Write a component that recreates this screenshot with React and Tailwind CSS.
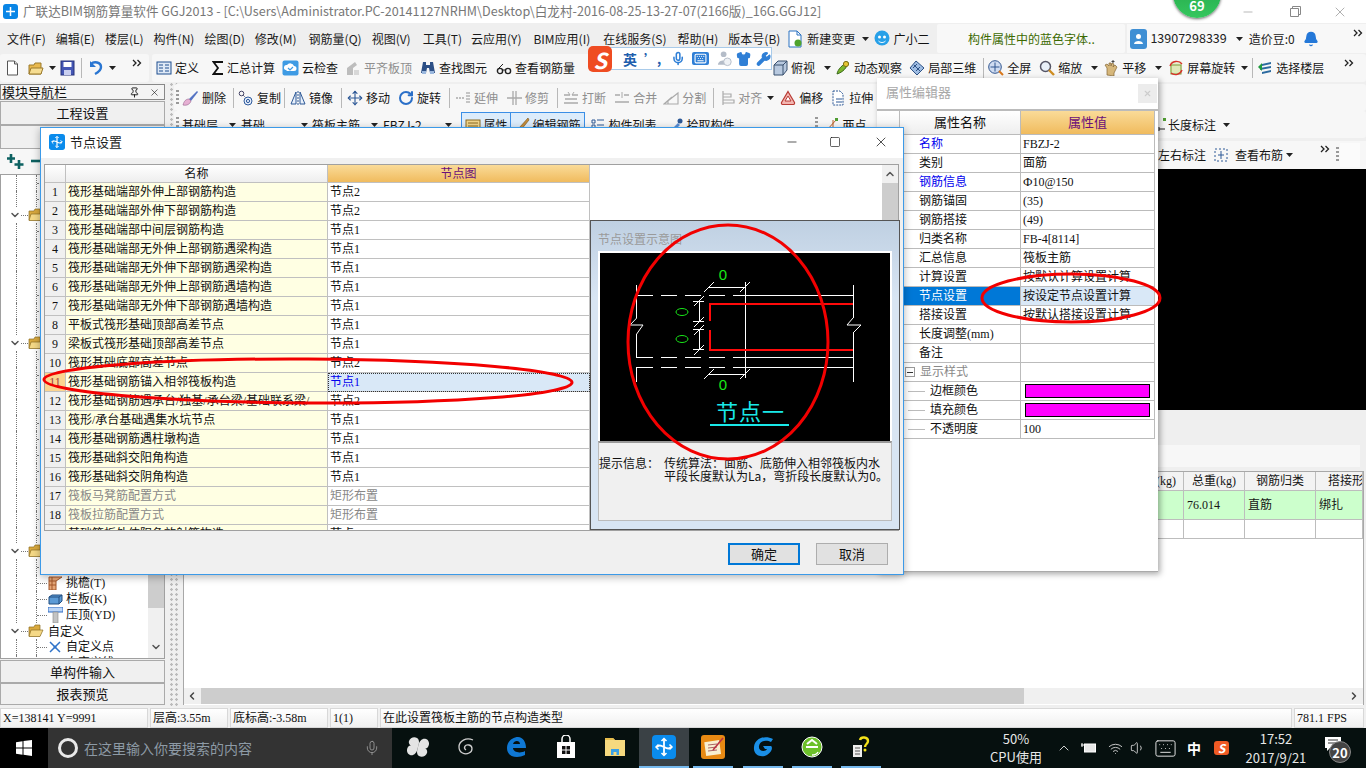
import React from 'react';
import { Bell, Wrench, Shirt, Mic, Keyboard, Wifi, Volume1, ChevronUp, ChevronDown, ChevronLeft, ChevronRight, X, Minus, Square, Pin, RotateCw, Move } from 'lucide-react';

const sim = "[font-family:'Liberation_Serif','Noto_Sans_CJK_SC',serif]";

const S = ({ children, w = 16, h = 16, className = '' }) => (
  <svg width={w} height={h} viewBox={`0 0 ${w} ${h}`} className={`shrink-0 ${className}`}>{children}</svg>
);
const Caret = ({ className = '' }) => (
  <svg width="7" height="4" viewBox="0 0 7 4" className={`shrink-0 ${className}`}><path d="M0 0h7L3.5 4z" fill="#222" /></svg>
);
const More = ({ className = '' }) => (
  <svg width="10" height="8" viewBox="0 0 10 8" className={`shrink-0 ${className}`}><path d="M1 1l3 3-3 3M5.5 1l3 3-3 3" fill="none" stroke="#222" strokeWidth="1.3" /></svg>
);
const Sep = ({ className = '' }) => <div className={`w-px h-[20px] bg-[#b8b8b8] shrink-0 ${className}`} />;
const Grip = ({ className = '' }) => <div className={`w-[3px] h-[16px] shrink-0 bg-[repeating-linear-gradient(#999_0_2px,transparent_2px_4px)] ${className}`} />;

const ic = {
  doc: <S w={13}><path d="M1.5 1h7l3 3v11h-10z" fill="#fff" stroke="#555" /><path d="M8.5 1v3h3" fill="#ddd" stroke="#555" /></S>,
  open: <S><path d="M1 5h5l1-2h6v11H1z" fill="#e9b94f" stroke="#9b7a2d" /><path d="M3 8h12l-2 6H1z" fill="#f6dd92" stroke="#9b7a2d" /></S>,
  save: <S w={15}><rect x="1" y="1" width="13" height="14" fill="#4557b5" stroke="#26337a" /><rect x="3.5" y="2" width="8" height="5" fill="#fff" /><rect x="4" y="10" width="7" height="5" fill="#c9cff0" /></S>,
  undo: <S w={14}><path d="M2 4c3-3 10-2 10 3 0 4-4 6-6 7" fill="none" stroke="#2a76d2" strokeWidth="2.4" /><path d="M1 1v6h6z" fill="#2a76d2" /></S>,
  define: <S><rect x="1" y="2" width="14" height="12" fill="#dfe9f6" stroke="#1f4f8f" /><path d="M3 5h4M3 8h4M3 11h4M9 5h4M9 8h4M9 11h4" stroke="#1f4f8f" /></S>,
  sigma: <S w={12}><path d="M11 2H1.5L6 8l-4.500 6H11" fill="none" stroke="#111" strokeWidth="1.8" /></S>,
  cloud: <S w={17}><rect x=".5" y=".5" width="16" height="15" rx="2" fill="#3e9be4" /><path d="M4 10a2.500 2.500 0 0 1 1-5 4 4 0 0 1 7 1 2.500 2.500 0 0 1 0 5H5z" fill="#fff" /><path d="M6 8l2 2 3-3" fill="none" stroke="#3e9be4" strokeWidth="1.2" /></S>,
  flush: <S><path d="M2 15V8l8-6 2 3-4 3v7z" fill="#bdbdbd" /><path d="M9 15v-5h5v5z" fill="#d8d8d8" /></S>,
  binoc: <S><path d="M3 2h3v3h4V2h3l2 11h-5l-1-5H7L6 13H1z" fill="#2c4f86" /><rect x="2" y="11" width="4" height="3" fill="#9bb8de" /><rect x="10" y="11" width="4" height="3" fill="#9bb8de" /></S>,
  glasses: <S><circle cx="4" cy="11" r="2.600" fill="none" stroke="#222" strokeWidth="1.4" /><circle cx="12" cy="11" r="2.600" fill="none" stroke="#222" strokeWidth="1.4" /><path d="M6.500 10h3M2 9l5-5" stroke="#222" /></S>,
  cube: <S><path d="M2 5l4-4h9v9l-4 5H2z" fill="#b8c9df" stroke="#39506f" /><path d="M2 5h9v10M11 5l4-4" fill="none" stroke="#39506f" /></S>,
  orbit: <S><path d="M2 14c1-5 5-9 11-12-1 6-5 10-11 12z" fill="#7db62f" stroke="#38691a" /><circle cx="11" cy="4" r="2.600" fill="#e7c635" stroke="#7d6e14" /></S>,
  local3d: <S><path d="M1 8l6-7 8 7-7 7z" fill="#9fbde3" stroke="#2e5285" /><path d="M4 8l4-4M7 11l4-4M5 5l6 6" stroke="#2e5285" /></S>,
  full: <S><circle cx="7" cy="7" r="6.300" fill="#cfdcf1" stroke="#2f548f" /><path d="M7 2.500v9M2.500 7h9" stroke="#2f548f" /><path d="M11 11l4 4" stroke="#d9771a" strokeWidth="2" /></S>,
  zoom: <S><circle cx="6.500" cy="6.500" r="5" fill="#e9f0f9" stroke="#556" strokeWidth="1.5" /><path d="M10 10l5 5" stroke="#cf8e22" strokeWidth="2.400" /></S>,
  pan: <S><path d="M4 15V8l-2-3 2-1 2 2V3h2v3l1-3 2 1-1 3 2-2 2 2-3 6v3z" fill="#d6b77b" stroke="#846533" strokeWidth=".7" /><path d="M10 3V0M8.500 1.500h3" stroke="#444" /></S>,
  rot: <S><path d="M2 12V3a2 2 0 0 1 2-2h8a2 2 0 0 1 2 2v9" fill="#e6efcf" /><rect x="3" y="5" width="10" height="9" fill="#dfe9b8" stroke="#7c9a33" /><path d="M2 6a7 7 0 0 1 12-2" fill="none" stroke="#d8312b" strokeWidth="1.400" /><path d="M14 10a7 7 0 0 1-11 3" fill="none" stroke="#d8312b" strokeWidth="1.400" /></S>,
  floors: <S><path d="M5 4l9-2v2l-9 2zM3 8l11-2v2L3 10zM5 12l9-2v2l-9 2z" fill="#2b6a9f" /><path d="M1 7l4-4v8z" fill="#1f9a3c" /></S>,
  del: <S w={17}><path d="M15 1L7 9l2 2 7-9z" fill="#5574c4" /><path d="M1 15c1-4 3-6 6-6l2 2c-1 3-4 5-8 4z" fill="#e6b0d3" stroke="#96608b" strokeWidth=".6" /></S>,
  copy: <S><circle cx="3.500" cy="3.500" r="2.300" fill="none" stroke="#446" /><circle cx="10" cy="11" r="4" fill="#e6eefb" stroke="#2e5a9c" /><circle cx="10" cy="11" r="1.600" fill="none" stroke="#2e5a9c" /><path d="M5 5l2 2" stroke="#446" strokeDasharray="1 1" /></S>,
  mirror: <S><path d="M6 2v12H1zM10 2v12h5z" fill="#e8f0fb" stroke="#2d5896" /><path d="M8 1v14" stroke="#2d5896" strokeDasharray="2 1" /></S>,
  move: <Move size={16} color="#2d5896" strokeWidth={1.700} className="shrink-0" />,
  rotate: <RotateCw size={16} color="#2a6fc8" strokeWidth={3} className="shrink-0" />,
  extend: <S><path d="M1 8h8M12 2v12M14 2v12" stroke="#aaa" strokeWidth="1.300" strokeDasharray="2 1" /></S>,
  trim: <S><path d="M7 1v14M10 1v14M1 8h15" stroke="#aaa" strokeWidth="1.300" /></S>,
  breakL: <S><path d="M1 5h6M9 5h6M1 13h14M2 9h12" stroke="#aaa" strokeWidth="1.400" /><path d="M5 2l2 3M11 2l-2 3" stroke="#aaa" /></S>,
  merge: <S><path d="M1 5h5M10 5h5M1 12h14" stroke="#aaa" strokeWidth="1.400" /><path d="M8 2v6" stroke="#aaa" /></S>,
  split: <S><path d="M1 14h14V3zM1 14L9 7M5 14V10" fill="none" stroke="#aaa" strokeWidth="1.100" /></S>,
  align: <S w={14}><path d="M2 1v14M2 4h8v3H2zM2 10h11v3H2z" fill="none" stroke="#aaa" strokeWidth="1.200" /></S>,
  offset: <S><path d="M8 1.500l6.500 11a1.500 1.500 0 0 1-1 2h-11a1.500 1.500 0 0 1-1-2z" fill="#f3b5b0" stroke="#b83b35" strokeWidth="1.200" /><path d="M8 6l3 5H5z" fill="#fff" stroke="#b83b35" /></S>,
  stretch: <S><path d="M3 1h7l3 3v11H3z" fill="#fff" stroke="#2d5896" strokeDasharray="2 1" /><path d="M6 9h6M6 12h6" stroke="#2d5896" /></S>,
  prop: <S><rect x="1" y="3" width="14" height="11" fill="#f1d58b" stroke="#8a6a22" /><path d="M3 6h10M3 9h10" stroke="#8a6a22" /></S>,
  edit: <S><path d="M14 1L5 11l2 2 8-10z" fill="#c48d3b" stroke="#765018" strokeWidth=".6" /><path d="M1 15h14" stroke="#111" strokeWidth="1.400" /></S>,
  list: <S><path d="M2 3h3v3H2zM7 3h7M2 8h3v3H2zM7 8h7M7 12h7" fill="none" stroke="#2d5896" /></S>,
  pick: <S><path d="M2 14L10 6l2 2-8 8z" fill="#5a8dd3" /><circle cx="12" cy="4" r="2.500" fill="#2d5896" /></S>,
  two: <S><path d="M2 14L13 2M9 14V3" stroke="#b75b22" /><rect x="1" y="12" width="3" height="3" fill="#4f9c32" /><rect x="11" y="1" width="3" height="3" fill="#4f9c32" /></S>,
};

function Tool({ m = '', icon, label, dim, arrow, caretM = 'ml-[6px]' }) {
  return (
    <div className={`flex items-center gap-[3px] shrink-0 ${m} ${dim ? 'text-[#8e8e8e]' : ''}`}>
      {icon}
      <span className="whitespace-nowrap">{label}</span>
      {arrow && <Caret className={caretM} />}
    </div>
  );
}

const menus = [
  ['文件(F)', ''], ['编辑(E)', 'ml-[10px]'], ['楼层(L)', 'ml-[10px]'], ['构件(N)', 'ml-[10px]'], ['绘图(D)', 'ml-[10px]'], ['修改(M)', 'ml-[10px]'],
  ['钢筋量(Q)', 'ml-[12px]'], ['视图(V)', 'ml-[10px]'], ['工具(T)', 'ml-[12px]'], ['云应用(Y)', 'ml-[9px]'], ['BIM应用(I)', 'ml-[12px]'], ['在线服务(S)', 'ml-[13px]'], ['帮助(H)', 'ml-[11px]'], ['版本号(B)', 'ml-[10px]'],
];

function TitleBar() {
  return (
    <div className="h-[23px] bg-white flex items-center shrink-0 relative">
      <div className="ml-[3px] w-[15px] h-[15px] rounded-[3px] bg-[#0a86e6] flex items-center justify-center">
        <svg width="11" height="11" viewBox="0 0 11 11"><path d="M5.500 1v9M1 5.500h9" stroke="#fff" strokeWidth="1.500" /></svg>
      </div>
      <span className="ml-[5px] text-[12.600px] text-[#777] whitespace-nowrap">广联达BIM钢筋算量软件 GGJ2013 - [C:\Users\Administrator.PC-20141127NRHM\Desktop\白龙村-2016-08-25-13-27-07(2166版)_16G.GGJ12]</span>
      <div className="ml-auto flex items-center text-[#888]">
        <Minus size={14} strokeWidth={1} className="mr-[35px]" />
        <svg width="11" height="11" viewBox="0 0 11 11" className="mr-[31px]"><path d="M.5 2.500h8v8h-8zM2.500 2.500v-2h8v8h-2" fill="none" stroke="#888" /></svg>
        <X size={16} strokeWidth={1} className="mr-[18px]" />
      </div>
    </div>
  );
}

function MenuBar() {
  return (
    <div className="h-[31px] bg-[#efefef] flex items-center shrink-0 text-[12px] text-[#1a1a1a] pl-[7px]">
      {menus.map(([t, m]) => <span key={t} className={`whitespace-nowrap ${m}`}>{t}</span>)}
      <svg width="16" height="18" viewBox="0 0 16 18" className="ml-[7px] shrink-0"><path d="M2 1h8l4 4v12H2z" fill="#fff" stroke="#2a72c2" /><path d="M10 1v4h4" fill="none" stroke="#2a72c2" /><circle cx="11" cy="13" r="3.500" fill="#4fa32c" /></svg>
      <span className="ml-[4px] whitespace-nowrap">新建变更</span>
      <Caret className="ml-[7px]" />
      <svg width="16" height="18" viewBox="0 0 16 18" className="ml-[5px] shrink-0"><ellipse cx="8" cy="8" rx="7.500" ry="7.500" fill="#27a0e8" /><circle cx="5.500" cy="7" r="1.500" fill="#fff" /><circle cx="10.500" cy="7" r="1.500" fill="#fff" /><path d="M4.500 11c2 2 5 2 7 0" stroke="#fff" fill="none" /></svg>
      <span className="ml-[3px] whitespace-nowrap text-[#111]">广小二</span>
      <div className="ml-[8px] w-[188px] h-[29px] bg-[#f8f8f8] rounded-[2px] flex items-center justify-center text-[#3c6a00] whitespace-nowrap shrink-0">构件属性中的蓝色字体..</div>
      <div className="ml-[2px] flex-1 h-[29px] bg-[#f8f8f8] flex items-center">
        <div className="ml-[3px] w-[17px] h-[20px] rounded-[3px] bg-[#3f8fd4] flex items-center justify-center">
          <svg width="11" height="12" viewBox="0 0 11 12"><circle cx="5.500" cy="3.500" r="2.500" fill="#fff" /><path d="M1 11c0-4 9-4 9 0z" fill="#fff" /></svg>
        </div>
        <span className="ml-[3px] text-[12.500px] text-[#222]">13907298339</span>
        <Caret className="ml-[9px]" />
        <span className="ml-[6px] whitespace-nowrap">造价豆:0</span>
        <Bell size={16} fill="#2478d8" color="#2478d8" className="ml-[8px] shrink-0" />
        <More className="ml-[34px] -mt-[12px]" />
      </div>
    </div>
  );
}

function Toolbar1() {
  return (
    <div className="h-[28px] flex shrink-0 text-[12px] text-[#151515] bg-[#efefef]">
      <div className="w-[149px] bg-[#f7f7f7] rounded-[3px] flex items-center pl-[6px]">
        {ic.doc}
        <div className="ml-[9px]">{ic.open}</div>
        <Caret className="ml-[5px]" />
        <div className="ml-[4px]">{ic.save}</div>
        <Sep className="ml-[6px]" />
        <div className="ml-[7px]">{ic.undo}</div>
        <Caret className="ml-[6px]" />
        <More className="ml-[16px] -mt-[10px]" />
      </div>
      <div className="flex-1 ml-[3px] bg-[#f7f7f7] rounded-[3px] flex items-center">
        <Tool m="ml-[4px]" icon={ic.define} label="定义" />
        <Tool m="ml-[13px]" icon={ic.sigma} label="汇总计算" />
        <Tool m="ml-[7px]" icon={ic.cloud} label="云检查" />
        <Tool m="ml-[7px]" icon={ic.flush} label="平齐板顶" dim />
        <Tool m="ml-[8px]" icon={ic.binoc} label="查找图元" />
        <Tool m="ml-[9px]" icon={ic.glasses} label="查看钢筋量" />
        <Tool m="ml-[197px]" icon={ic.cube} label="俯视" arrow />
        <Tool m="ml-[4px]" icon={ic.orbit} label="动态观察" />
        <Tool m="ml-[7px]" icon={ic.local3d} label="局部三维" />
        <Sep className="ml-[7px]" />
        <Tool m="ml-[4px]" icon={ic.full} label="全屏" />
        <Tool m="ml-[8px]" icon={ic.zoom} label="缩放" arrow />
        <Tool m="ml-[5px]" icon={ic.pan} label="平移" arrow />
        <Tool m="ml-[6px]" icon={ic.rot} label="屏幕旋转" arrow caretM="ml-[3px]" />
        <Sep className="ml-[4px]" />
        <Tool m="ml-[4px]" icon={ic.floors} label="选择楼层" />
        <More className="ml-[20px] -mt-[10px]" />
      </div>
    </div>
  );
}

const TreeKid = ({ icon, label }) => (
  <div className="h-4 ml-[15px] border-l border-dotted border-[#777]">
    <div className="h-4 ml-[19px] border-l border-dotted border-[#777] flex items-center">
      <div className="w-[10px] border-t border-dotted border-[#777] shrink-0" />
      <div className="w-[16px] flex justify-center shrink-0">{icon}</div>
      {label && <span className={`ml-[3px] whitespace-nowrap ${sim} text-[#111]`}>{label}</span>}
    </div>
  </div>
);
const TreeGroup = ({ label }) => (
  <div className="h-4 flex items-center">
    <ChevronDown size={12} strokeWidth={3} color="#555" className="ml-[8px] shrink-0" />
    <div className="w-[7px] border-t border-dotted border-[#777] shrink-0" />
    <svg width="16" height="14" viewBox="0 0 16 14" className="shrink-0"><path d="M1 3h5l1-2h5v11H1z" fill="#d9a93e" stroke="#8c6f24" strokeWidth=".7" /><path d="M3 6h12l-3 6.500H1z" fill="#f5d987" stroke="#8c6f24" strokeWidth=".7" /></svg>
    {label && <span className="ml-[4px] whitespace-nowrap text-[#111]">{label}</span>}
  </div>
);
const kidIc = {
  t: <svg width="15" height="14" viewBox="0 0 15 14"><path d="M1 1h13L8 5v9H1z" fill="#e6a778" stroke="#a3562b" /><path d="M1 5h7M1 9h7M4 1v13" stroke="#a3562b" /></svg>,
  k: <svg width="15" height="12" viewBox="0 0 15 12"><path d="M1 4l3-2h10v6l-3 3H1z" fill="#5c9bd6" stroke="#234f80" /><path d="M1 4h10v7M11 4l3-2" fill="none" stroke="#234f80" /></svg>,
  y: <svg width="15" height="16" viewBox="0 0 15 16"><rect x="0" y="0" width="15" height="5" fill="#bcd6f7" stroke="#2f6bc2" /><rect x="5" y="5" width="5" height="11" fill="#c4c4c4" stroke="#888" strokeWidth=".6" /></svg>,
  p: <svg width="14" height="14" viewBox="0 0 14 14"><path d="M2 2l10 10M12 2L2 12" stroke="#2f73c9" strokeWidth="1.500" /><circle cx="7" cy="7" r="1.500" fill="#2f73c9" /></svg>,
  l: <svg width="15" height="8" viewBox="0 0 15 8"><path d="M1 4h13" stroke="#2f6bc2" /><rect x="0" y="2" width="3" height="4" fill="#2f6bc2" /><rect x="12" y="2" width="3" height="4" fill="#2f6bc2" /></svg>,
};

function LeftPanel() {
  const blank = (n, p) => Array.from({ length: n }, (_, i) => <TreeKid key={p + i} />);
  return (
    <div className="w-[165px] shrink-0 flex flex-col text-[12px] text-[#111] bg-[#f0f0f0]">
      <div className="h-[16px] mt-[2px] flex items-center border border-[#888] px-[1px] text-[13px] text-[#111] bg-[#f4f4f4]">
        <span className="whitespace-nowrap">模块导航栏</span>
        <Pin size={11} color="#111" className="ml-auto mr-[9px]" />
        <X size={11} strokeWidth={1.300} color="#111" className="mr-[3px]" />
      </div>
      <div className="h-[24px] mt-px flex items-center justify-center border border-[#aaa] bg-[#f0f0f0] text-[13px]">工程设置</div>
      <div className="h-[24px] border border-[#aaa] bg-[#f0f0f0]" />
      <div className="h-[25px] flex items-center pl-[6px] bg-[#f7f7f7]">
        <svg width="40" height="20" viewBox="0 0 40 20"><path d="M5 2v9M1 6.500h8M13 8v9M8.500 12.500h9" stroke="#0d6262" strokeWidth="2.600" /><path d="M25 9h11" stroke="#0d6262" strokeWidth="2.600" /></svg>
      </div>
      <div className="flex-1 min-h-0 flex border border-[#a0a0a0] bg-white overflow-hidden">
        <div className="flex-1 min-w-0 overflow-hidden">
          {blank(2, 'a')}
          <TreeGroup />
          {blank(7, 'b')}
          <TreeGroup />
          {blank(12, 'c')}
          <TreeGroup />
          <TreeKid />
          <TreeKid icon={kidIc.t} label="挑檐(T)" />
          <TreeKid icon={kidIc.k} label="栏板(K)" />
          <TreeKid icon={kidIc.y} label="压顶(YD)" />
          <TreeGroup label="自定义" />
          <TreeKid icon={kidIc.p} label="自定义点" />
          <TreeKid icon={kidIc.l} label="自定义线(X)" />
        </div>
        <div className="w-[16px] shrink-0 flex flex-col bg-[#f0f0f0]">
          <div className="h-[433px] bg-[#cdcdcd] shrink-0" />
          <div className="mt-auto h-[16px] flex items-center justify-center mb-[3px]"><ChevronDown size={12} strokeWidth={3} color="#555" /></div>
        </div>
      </div>
      <div className="h-[23px] mt-px flex items-center justify-center border border-[#aaa] text-[13px]">单构件输入</div>
      <div className="h-[22px] mb-[2px] flex items-center justify-center border border-[#aaa] text-[13px]">报表预览</div>
    </div>
  );
}

function RightArea() {
  return (
    <div className="flex-1 min-w-0 flex flex-col text-[12px] text-[#151515] bg-[#efefef]">
      <div className="h-[27px] mt-[2px] shrink-0 bg-[#f7f7f7] rounded-[3px] flex items-center ml-[-9px] relative">
        <Grip className="ml-[2px]" />
        <Tool m="ml-[3px]" icon={ic.del} label="删除" />
        <Sep className="ml-[7px]" />
        <Tool m="ml-[4px]" icon={ic.copy} label="复制" />
        <Sep className="ml-[3px]" />
        <Tool m="ml-[5px]" icon={ic.mirror} label="镜像" />
        <Sep className="ml-[8px]" />
        <Tool m="ml-[5px]" icon={ic.move} label="移动" />
        <Tool m="ml-[8px]" icon={ic.rotate} label="旋转" />
        <Sep className="ml-[8px]" />
        <Tool m="ml-[5px]" icon={ic.extend} label="延伸" dim />
        <Tool m="ml-[8px]" icon={ic.trim} label="修剪" dim />
        <Sep className="ml-[8px]" />
        <Tool m="ml-[5px]" icon={ic.breakL} label="打断" dim />
        <Tool m="ml-[8px]" icon={ic.merge} label="合并" dim />
        <Tool m="ml-[6px]" icon={ic.split} label="分割" dim />
        <Sep className="ml-[7px]" />
        <Tool m="ml-[7px]" icon={ic.align} label="对齐" dim arrow caretM="ml-[2px]" />
        <Tool m="ml-[6px]" icon={ic.offset} label="偏移" />
        <Tool m="ml-[7px]" icon={ic.stretch} label="拉伸" />
      </div>
      <div className="h-[27px] shrink-0 flex items-center ml-[-9px]">
        <div className="h-full flex-1 bg-[#f7f7f7] rounded-[3px] flex items-center relative">
          <Grip className="ml-[2px]" />
          <span className="ml-[3px]">基础层</span><Caret className="ml-[11px]" />
          <span className="ml-[5px]">基础</span><Caret className="ml-[36px]" />
          <span className="ml-[4px]">筏板主筋</span><Caret className="ml-[11px]" />
          <span className="ml-[5px]">FBZJ-2</span><Caret className="ml-[23px]" />
          <div className="ml-[9px] h-[25px] w-[50px] border border-[#3a8ee6] bg-[#dcecfb] flex items-center pl-[3px] gap-[3px]">{ic.prop}<span>属性</span></div>
          <div className="h-[25px] w-[74px] border border-[#3a8ee6] border-l-0 bg-[#dcecfb] flex items-center pl-[3px] gap-[3px]">{ic.edit}<span className="whitespace-nowrap">编辑钢筋</span></div>
          <Tool m="ml-[5px]" icon={ic.list} label="构件列表" />
          <Tool m="ml-[11px]" icon={ic.pick} label="拾取构件" />
          <Grip className="ml-[80px]" />
          <Tool m="ml-[6px]" icon={ic.two} label="两点" />
          <div className="ml-auto mr-[136px] flex items-center gap-[1px] shrink-0">
            <svg width="9" height="14" viewBox="0 0 9 14"><rect x="5" y="0" width="3" height="3" fill="#4f9c32" /><path d="M1 11h6M1 9v4" stroke="#222" /></svg>
            <span className="whitespace-nowrap">长度标注</span>
            <Caret className="ml-[6px]" />
          </div>
        </div>
      </div>
      <div className="h-[28px] shrink-0 flex items-center bg-[#f7f7f7] mt-[3px] justify-end text-[#151515]">
        <span className="whitespace-nowrap">左右标注</span>
        <svg width="14" height="14" viewBox="0 0 14 14" className="ml-[8px] shrink-0"><path d="M1 1h12v12H1z" fill="none" stroke="#2d5896" strokeDasharray="2 2" /><path d="M7 3v8M4 7h6" stroke="#2d5896" /></svg>
        <span className="ml-[7px] whitespace-nowrap">查看布筋</span>
        <Caret className="ml-[3px]" />
        <More className="ml-[27px] -mt-[12px]" />
        <Grip className="ml-[6px]" />
        <div className="w-[20px] h-[24px] ml-[1px] bg-[#fbfbfb]" />
        <div className="w-[6px]" />
      </div>
      <div className="h-[241px] shrink-0 bg-black" />
      <div className="h-[35px] shrink-0" />
      <div className="h-[22px] shrink-0 bg-[#f7f7f7] mr-[6px]" />
      <div className="h-[4px] shrink-0" />
      <div className="flex-1 min-h-0 bg-white border border-[#a8a8a8] border-b-0 mr-[2px] flex flex-col">
        <div className={`grid grid-cols-[1fr_61px_71px_47px] ${sim}`}>
          {[['(kg)', 'justify-end pr-[7px]'], ['总重(kg)', 'justify-center'], ['钢筋归类', 'justify-center'], ['搭接形式', 'pl-[12px]']].map(([t, c]) => (
            <div key={t} className={`h-[19px] flex items-center overflow-hidden whitespace-nowrap bg-[#f3f3f3] border-b border-r border-[#bdbdbd] ${c}`}>{t}</div>
          ))}
          {['', '76.014', '直筋', '绑扎'].map((t, i) => (
            <div key={i} className="h-[29px] flex items-center pl-[3px] bg-[#ccffcc] border-b border-r border-[#bdbdbd]">{t}</div>
          ))}
          {[0, 1, 2, 3].map(i => <div key={i} className="h-[19px] border-b border-r border-[#bdbdbd]" />)}
        </div>
        <div className="flex-1" />
        <div className="h-[16px] shrink-0 bg-[#f0f0f0] flex items-center mb-[1px]">
          <ChevronLeft size={12} strokeWidth={3} color="#444" className="ml-[2px] shrink-0" />
          <div className="ml-[3px] w-[823px] h-full bg-[#cdcdcd] shrink-0" />
          <ChevronRight size={12} strokeWidth={3} color="#444" className="ml-auto mr-[3px] shrink-0" />
        </div>
      </div>
      <div className="h-[2px] shrink-0" />
    </div>
  );
}

function StatusBar() {
  const c = `h-[20px] flex items-center pl-[2px] bg-[linear-gradient(#fff,#f0f0f0)] border border-[#d8d8d8] whitespace-nowrap shrink-0 ${sim}`;
  return (
    <div className="h-[21px] flex gap-[2px] text-[12px] text-[#111] shrink-0 bg-[#f0f0f0] pt-px">
      <div className={`${c} w-[148px]`}>X=138141 Y=9991</div>
      <div className={`${c} w-[78px]`}>层高:3.55m</div>
      <div className={`${c} w-[98px]`}>底标高:-3.58m</div>
      <div className={`${c} w-[48px]`}>1(1)</div>
      <div className={`${c} w-[912px]`}>在此设置筏板主筋的节点构造类型</div>
      <div className={`${c} w-[70px]`}>781.1 FPS</div>
    </div>
  );
}

const Tb = ({ children, active, line = true }) => (
  <div className={`w-[49.300px] h-full flex flex-col items-center shrink-0 ${active ? 'bg-[#3a4145]' : ''}`}>
    <div className="flex-1 flex items-center justify-center">{children}</div>
    <div className={`h-[2px] ${active ? 'w-full' : 'w-[40px]'} ${line ? 'bg-[#76b9ed]' : ''}`} />
  </div>
);
const AppIcon = ({ size = 24 }) => (
  <svg width={size} height={size} viewBox="0 0 24 24"><rect width="24" height="24" rx="4" fill="#0a8bec" /><path d="M12 4v16M5 12c2-2 3-2 7 0s5 2 7 0" fill="none" stroke="#fff" strokeWidth="1.800" /><path d="M9.500 6L12 3.500 14.500 6M9.500 18l2.500 2.500 2.500-2.500M6.500 9.500L4 12l2.500 2.500M17.500 9.500L20 12l-2.500 2.500" fill="none" stroke="#fff" strokeWidth="1.500" /></svg>
);

function Taskbar() {
  return (
    <div className="h-[40px] flex shrink-0 bg-[#06100f] text-white">
      <div className="w-[48px] bg-black flex items-center justify-center">
        <svg width="16" height="16" viewBox="0 0 16 16"><path d="M0 2.300l6.500-1v6.300H0zM7.500 1.100L16 0v7.600H7.500zM0 8.500h6.500v6.300L0 13.800zM7.500 8.500H16V16l-8.500-1.200z" fill="#fff" /></svg>
      </div>
      <div className="w-[344px] bg-[#333] flex items-center">
        <div className="ml-[10px] w-[20px] h-[20px] rounded-full border-[3px] border-[#e8e8e8]" />
        <span className="ml-[6px] text-[14px] text-[#8d9aa5] whitespace-nowrap">在这里输入你要搜索的内容</span>
        <Mic size={16} strokeWidth={1.300} color="#9a9a9a" className="ml-auto mr-[12px]" />
      </div>
      <div className="w-px" />
      <Tb line={false}><svg width="22" height="22" viewBox="0 0 22 22"><g fill="#e4e4e4"><path d="M11 11C4 12 1 8 2 5s5-5 8-3 2 6 1 9z" /><path d="M11 11c1-7 5-9 8-8s4 5 2 8-6 1-10 0z" /><path d="M11 11c7-1 10 3 9 6s-5 5-8 3-2-6-1-9z" /><path d="M11 11c-1 7-5 9-8 8s-4-5-2-8 6-1 10 0z" /></g></svg></Tb>
      <Tb line={false}><svg width="20" height="20" viewBox="0 0 20 20"><path d="M16 3C9 0 2 4 2 10s6 8 10 6 4-7 0-8-6 3-3 5" fill="none" stroke="#cfcfcf" strokeWidth="1.300" /></svg></Tb>
      <Tb line={false}><svg width="22" height="22" viewBox="0 0 22 22"><path d="M2 12C2 5 8 1 13 1c5 0 8 5 8 11H8c0 4 7 6 12 3v4c-8 4-18 2-18-7zM8 8h7c0-4-6-4-7 0z" fill="#0f78d4" /></svg></Tb>
      <Tb line={false}><svg width="20" height="24" viewBox="0 0 20 24"><path d="M1 7h18v16H1z" fill="#fff" /><path d="M6 7V4a4 4 0 0 1 8 0v3" fill="none" stroke="#fff" strokeWidth="1.500" /><path d="M6 11h3.500v3.500H6zM10.500 11H14v3.500h-3.500zM6 15.500h3.500V19H6zM10.500 15.500H14V19h-3.500z" fill="#111" /></svg></Tb>
      <Tb line={false}><svg width="22" height="20" viewBox="0 0 22 20"><path d="M1 1h8l2 2h10v16H1z" fill="#f6d97f" /><path d="M1 1h8l2 2H1z" fill="#e7bd4d" /><path d="M7 18v-6h8v6h-2.500v-3h-3v3z" fill="#3aa0e6" /></svg></Tb>
      <Tb active><AppIcon /></Tb>
      <Tb><svg width="24" height="24" viewBox="0 0 24 24"><rect width="24" height="24" rx="3" fill="#e88a13" /><rect x="4" y="6" width="15" height="14" fill="#f8efd0" transform="rotate(-8 12 12)" /><path d="M7 10l9-1M7 13l9-1M7 16l9-1" stroke="#a66" /><path d="M22 3L12 15" stroke="#b34" strokeWidth="1.600" /></svg></Tb>
      <Tb><svg width="24" height="24" viewBox="0 0 24 24"><path d="M22 4C14 0 4 3 3 12s8 11 13 8 6-8 4-9l-8 0 2 3h2c-1 3-9 3-8-3s8-6 12-4z" fill="#1a8fe6" /></svg></Tb>
      <Tb><svg width="22" height="24" viewBox="0 0 22 24"><circle cx="11" cy="12" r="10" fill="#6cc02a" stroke="#fff" strokeWidth="1" /><path d="M5 12h12M6 9l5-4 5 4" fill="none" stroke="#fff" strokeWidth="2" /><path d="M11 20c3 0 5-1 6-3" stroke="#fff" fill="none" strokeWidth="1.500" /></svg></Tb>
      <Tb><svg width="18" height="22" viewBox="0 0 18 22"><rect x="1" y="9" width="9" height="12" fill="#eee" /><path d="M3 12h5M3 15h5M3 18h5" stroke="#555" /><path d="M8 4c1-4 8-3 8 1 0 3-3 3-3 6" fill="none" stroke="#f4e21a" strokeWidth="2.400" /><circle cx="13" cy="14" r="1.500" fill="#f4e21a" /></svg></Tb>

      <div className="ml-[100px] w-[60px] flex flex-col items-center justify-center text-[13px] leading-[18px] text-[#e8e8e8]">
        <span>50%</span><span className="whitespace-nowrap">CPU使用</span>
      </div>
      <ChevronUp size={16} strokeWidth={1.400} color="#ddd" className="ml-[10px] self-center shrink-0" />
      <svg width="16" height="12" viewBox="0 0 16 12" className="ml-[9px] self-center shrink-0"><rect x="3.500" y="2" width="11" height="8" fill="#e8e8e8" stroke="#fff" /><path d="M0 3h3M1 1v4" stroke="#fff" /></svg>
      <Wifi size={15} strokeWidth={1.500} color="#cfcfcf" className="ml-[11px] self-center shrink-0" />
      <Volume1 size={16} strokeWidth={1.300} color="#ddd" className="ml-[7px] self-center shrink-0" />
      <Keyboard size={23} strokeWidth={1} color="#e8e8e8" className="ml-[8px] self-center shrink-0" />
      <span className="ml-[10px] self-center text-[14px] font-bold">中</span>
      <div className="ml-[13px] self-center w-[15px] h-[14px] rounded-[3px] bg-[#ef5a24] flex items-center justify-center text-[12px] font-bold italic leading-none shrink-0">S</div>
      <div className="ml-[14px] w-[66px] flex flex-col items-center justify-center text-[13px] leading-[19px] text-[#e8e8e8]">
        <span>17:52</span><span>2017/9/21</span>
      </div>
      <div className="flex-1 flex items-center justify-center relative pr-[9px]">
        <svg width="16" height="14" viewBox="0 0 16 14" className="-mt-[8px]"><path d="M0 0h16v11H5l-3 3v-3H0z" fill="#fff" /><path d="M3 3h10M3 6h10" stroke="#333" /></svg>
        <div className="absolute left-[20px] top-[13px] w-[22px] h-[22px] rounded-full bg-[#444] border border-[#888] flex items-center justify-center text-[13px] font-bold leading-none">20</div>
      </div>
    </div>
  );
}

function Sogou() {
  return (
    <div className="absolute left-[588px] top-[45px] flex items-center h-[27px]">
      <div className="w-[24px] h-[26px] rounded-[5px] bg-[#ef4c22] flex items-center justify-center text-white text-[22px] font-bold italic leading-none z-10">S</div>
      <div className="-ml-[4px] h-[23px] w-[164px] bg-white border border-[#a9cbea] flex items-center pl-[14px] text-[#1f5fae]">
        <span className="text-[14px] font-bold leading-none">英</span>
        <span className="ml-[7px] text-[13px] font-bold leading-none">’,</span>
        <Mic size={15} color="#2f7fd6" strokeWidth={2.600} className="ml-[10px]" />
        <div className="ml-[7px] w-[17px] h-[13px] rounded-[2px] bg-[#2f7fd6] flex items-center justify-center">
          <Keyboard size={13} color="#fff" />
        </div>
        <svg width="16" height="17" viewBox="0 0 16 17" className="ml-[8px]"><circle cx="7" cy="4" r="3" fill="#b4bcc8" /><path d="M1 15c0-6 12-6 12 0z" fill="#b4bcc8" /><circle cx="11" cy="12" r="4" fill="#eef1f5" stroke="#b4bcc8" /></svg>
        <Shirt size={16} fill="#2f7fd6" color="#2f7fd6" className="ml-[4px]" />
        <Wrench size={16} fill="#2f7fd6" color="#2f7fd6" className="ml-[5px]" />
      </div>
    </div>
  );
}

const props = [
  ['名称', 'FBZJ-2', 'blue'], ['类别', '面筋'], ['钢筋信息', 'Ф10@150', 'blue'], ['钢筋锚固', '(35)'], ['钢筋搭接', '(49)'], ['归类名称', 'FB-4[8114]'],
  ['汇总信息', '筏板主筋'], ['计算设置', '按默认计算设置计算'], ['节点设置', '按设定节点设置计算', 'sel'], ['搭接设置', '按默认搭接设置计算'], ['长度调整(mm)', ''], ['备注', ''],
];

function PropEditor() {
  return (
    <div className="absolute left-[877px] top-[78px] w-[281px] h-[494px] bg-white shadow-[2px_2px_6px_rgba(0,0,0,0.35)] border-b border-[#aaa] text-[12px] text-[#111] flex flex-col">
      <div className="h-[31px] flex items-center shrink-0 pl-[9px]">
        <span className="text-[13px] text-[#a8a8a8] pb-[3px]">属性编辑器</span>
        <div className="ml-auto mr-px w-[19px] h-[19px] bg-[#ececec] flex items-center justify-center"><X size={9} color="#ccc" strokeWidth={3} /></div>
      </div>
      <div className={`grid grid-cols-[23px_121px_134px] border-t-2 border-[#bbb] ${sim}`}>
        <div className="h-[24px] border-b border-r border-[#bbb] bg-[linear-gradient(#fff,#eee)]" />
        <div className="h-[24px] border-b border-r border-[#bbb] bg-[linear-gradient(#fff,#eee)] flex items-center justify-center text-[13px]">属性名称</div>
        <div className="h-[24px] border-b border-r border-[#bbb] bg-[linear-gradient(#fadb98,#f0bb5e)] flex items-center justify-center text-[13px] text-[#6a0f7a]">属性值</div>
        {props.map(([n, v, k]) => (
          <React.Fragment key={n}>
            <div className="h-[19px] border-b border-[#bbb]" />
            <div className={`h-[19px] border-b border-r border-[#bbb] flex items-center -ml-[4px] pl-[23px] ${k === 'blue' ? 'text-[#0000ee]' : ''} ${k === 'sel' ? 'bg-[#0078d7] text-white' : ''}`}>{n}</div>
            <div className={`h-[19px] border-b border-r border-[#bbb] flex items-center pl-[2px] whitespace-nowrap ${k === 'sel' ? 'bg-[#d9e8f7]' : ''}`}>{v}</div>
          </React.Fragment>
        ))}
        <div className="h-[19px] border-b border-[#bbb]" />
        <div className="h-[19px] border-b border-r border-[#bbb] flex items-center -ml-[4px] pl-[9px] text-[#888]">
          <div className="w-[10px] h-[10px] border border-[#999] flex items-center justify-center mr-[5px]"><div className="w-[6px] h-px bg-[#333]" /></div>显示样式
        </div>
        <div className="h-[19px] border-b border-r border-[#bbb]" />
        {['边框颜色', '填充颜色', '不透明度'].map((n, i) => (
          <React.Fragment key={n}>
            <div className="h-[19px] border-b border-[#bbb]" />
            <div className="h-[19px] border-b border-r border-[#bbb] flex items-center -ml-[4px] pl-[12px]">
              <div className="w-[17px] border-t border-[#bbb] mr-[5px]" />{n}
            </div>
            <div className="h-[19px] border-b border-r border-[#bbb] flex items-center pl-[2px]">
              {i < 2 ? <div className="ml-[2px] w-[125px] h-[14px] bg-[#ff00ff] border border-black" /> : '100'}
            </div>
          </React.Fragment>
        ))}
      </div>
    </div>
  );
}

const rows = [
  ['筏形基础端部外伸上部钢筋构造', '节点2'], ['筏形基础端部外伸下部钢筋构造', '节点2'], ['筏形基础端部中间层钢筋构造', '节点1'],
  ['筏形基础端部无外伸上部钢筋遇梁构造', '节点1'], ['筏形基础端部无外伸下部钢筋遇梁构造', '节点1'], ['筏形基础端部无外伸上部钢筋遇墙构造', '节点1'],
  ['筏形基础端部无外伸下部钢筋遇墙构造', '节点1'], ['平板式筏形基础顶部高差节点', '节点1'], ['梁板式筏形基础顶部高差节点', '节点1'],
  ['筏形基础底部高差节点', '节点2'], ['筏形基础钢筋锚入相邻筏板构造', '节点1'], ['筏形基础钢筋遇承台/独基/承台梁/基础联系梁/', '节点2'],
  ['筏形/承台基础遇集水坑节点', '节点1'], ['筏形基础钢筋遇柱墩构造', '节点1'], ['筏形基础斜交阳角构造', '节点1'], ['筏形基础斜交阴角构造', '节点1'],
  ['筏板马凳筋配置方式', '矩形布置'], ['筏板拉筋配置方式', '矩形布置'], ['基础筏板外伸阳角放射筋构造', '节点1'],
];

function Drawing() {
  const ticks = [[109, 34], [145, 34], [109, 121], [145, 121], [99, 48], [99, 69], [99, 77], [99, 97]];
  return (
    <svg width="290" height="188" viewBox="0 0 290 188" className="block bg-black" shapeRendering="crispEdges">
      <g stroke="#fff" fill="none">
        <path d="M37 42.500h108M37 104.500h108M37 114.500h108" strokeDasharray="16 8" />
        <path d="M145 42.500h108M145 104.500h108M145 114.500h108M36.500 32v33M36.500 81v24M36.500 114v15M253.500 32v33M253.500 80v49M145.500 29v96" />
        <path d="M109 34.500h36M109 121.500h36M99.500 48v21M99.500 77v20M93 48.500h11M93 68.500h11M93 76.500h11M93 96.500h11" />
        <g shapeRendering="auto">
          {ticks.map(([x, y]) => <path key={`${x}-${y}`} d={`M${x - 5} ${y + 5}L${x + 5} ${y - 5}`} />)}
          <path d="M36.700 65L30 72h13L36.700 81M253 65l-6 7h14l-8 8" />
        </g>
      </g>
      <path d="M110 68V51h143M110 77v20h143" fill="none" stroke="#ff0a0a" strokeWidth="2" />
      <ellipse cx="82" cy="59" rx="6" ry="3.500" fill="none" stroke="#19e619" shapeRendering="auto" />
      <ellipse cx="82" cy="86" rx="6" ry="3.500" fill="none" stroke="#19e619" shapeRendering="auto" />
      <text x="123" y="27" textAnchor="middle" fill="#19e619" fontSize="15" fontFamily="Liberation Sans" shapeRendering="auto">0</text>
      <text x="123" y="137" textAnchor="middle" fill="#19e619" fontSize="15" fontFamily="Liberation Sans" shapeRendering="auto">0</text>
      <text x="116" y="167" fill="#19e8e8" fontSize="22" letterSpacing="1" fontFamily="Noto Sans CJK SC" shapeRendering="auto">节点一</text>
      <path d="M110 172h79" stroke="#19e8e8" strokeWidth="2" />
    </svg>
  );
}

function Dialog() {
  return (
    <div className="absolute left-[40px] top-[127px] w-[864px] h-[448px] bg-[#f0f0f0] border border-[#3c9ae8] flex flex-col text-[12px] text-[#111] shadow-[0_2px_8px_rgba(0,0,0,0.3)]">
      <div className="h-[30px] shrink-0 bg-white flex items-center text-[#222] pb-[2px]">
        <div className="ml-[8px]"><AppIcon size={16} /></div>
        <span className="ml-[5px] text-[13px]">节点设置</span>
        <div className="ml-auto flex items-center text-[#111]">
          <Minus size={14} strokeWidth={1.200} className="mr-[30px]" />
          <Square size={12} strokeWidth={1.300} className="mr-[32px]" />
          <X size={16} strokeWidth={1.100} className="mr-[14px]" />
        </div>
      </div>
      <div className={`ml-[3px] mt-[6px] w-[855px] h-[367px] shrink-0 border border-[#a0a0a0] bg-white flex overflow-hidden ${sim}`}>
        <div className="w-[545px] shrink-0 overflow-hidden">
          <div className="grid grid-cols-[21px_262px_262px]">
            <div className="h-[18px] bg-[linear-gradient(#fff,#eee)] border-b border-r border-[#c0c0c0]" />
            <div className="h-[18px] bg-[linear-gradient(#fff,#eee)] border-b border-r border-[#c0c0c0] flex items-center justify-center">名称</div>
            <div className="h-[18px] bg-[linear-gradient(#fadb98,#f0bb5e)] border-b border-r border-[#c0c0c0] flex items-center justify-center text-[#6a0f7a]">节点图</div>
            {rows.map(([n, v], i) => {
              const dim = i === 16 || i === 17;
              const sel = i === 10;
              return (
                <React.Fragment key={i}>
                  <div className={`h-[19px] border-b border-r border-[#c0c0c0] flex items-center justify-center ${sel ? 'bg-[#fbd490] text-[#a03a3a]' : 'bg-[#f0f0f0]'}`}>{i + 1}</div>
                  <div className={`h-[19px] border-b border-r border-[#c0c0c0] bg-[#ffffe3] flex items-center pl-[2px] whitespace-nowrap overflow-hidden ${dim ? 'text-[#888]' : ''}`}>{n}</div>
                  <div className={`h-[19px] border-b border-r border-[#c0c0c0] flex items-center pl-[2px] ${dim ? 'text-[#888]' : ''} ${sel ? 'bg-[#d9e8f7] text-[#0000ee] outline-1 outline-dotted -outline-offset-1 outline-[#333]' : ''}`}>{v}</div>
                </React.Fragment>
              );
            })}
          </div>
        </div>
        <div className="flex-1" />
        <div className="w-[16px] shrink-0 flex flex-col bg-[#f0f0f0]">
          <div className="h-[18px] flex items-center justify-center"><ChevronUp size={12} strokeWidth={3} color="#555" /></div>
          <div className="h-[60px] bg-[#cdcdcd]" />
        </div>
      </div>
      <div className="flex justify-end gap-[16px] pr-[15px] mt-[12px] text-[13px]">
        <button className="w-[72px] h-[22px] border-2 border-[#0078d7] bg-[#e1e1e1] flex items-center justify-center">确定</button>
        <button className="w-[72px] h-[22px] border border-[#adadad] bg-[#e1e1e1] flex items-center justify-center">取消</button>
      </div>
      <div className="absolute left-[549px] top-[92px] w-[310px] h-[310px] border border-[#555] bg-[linear-gradient(#bfd0e2,#d8e5f3_25%)] flex flex-col items-center">
        <div className="h-[31px] w-full shrink-0 pl-[7px] flex items-center text-[#9a9a9a] pt-[5px]">节点设置示意图</div>
        <div className="border-2 border-white border-b-0 mt-[-1px]"><Drawing /></div>
        <div className="w-[294px] h-[80px] bg-[#f0f0f0] border border-[#bbb] border-t-2 border-t-[#999] flex text-[12px] leading-[13px] pt-[13px]">
          <span className="whitespace-nowrap">提示信息：</span>
          <span className="ml-[5px] whitespace-nowrap">传统算法：面筋、底筋伸入相邻筏板内水<br />平段长度默认为La，弯折段长度默认为0。</span>
        </div>
      </div>
    </div>
  );
}

function Annotations() {
  return (
    <svg width="1366" height="768" viewBox="0 0 1366 768" className="absolute left-0 top-0 pointer-events-none">
      <g fill="none" stroke="#f20000" strokeWidth="3">
        <ellipse cx="728" cy="342" rx="100" ry="117" />
        <ellipse cx="308" cy="381" rx="264" ry="22" transform="rotate(0.300 308 381)" />
        <ellipse cx="1071" cy="298" rx="89" ry="24" />
      </g>
    </svg>
  );
}

export default function App() {
  return (
    <div className="w-[1366px] h-[768px] relative overflow-hidden flex flex-col bg-[#efefef] [font-family:'Noto_Sans_CJK_SC','Noto_Sans',sans-serif]">
      <TitleBar />
      <MenuBar />
      <Toolbar1 />
      <div className="flex-1 min-h-0 flex">
        <LeftPanel />
        <div className="w-[18px] shrink-0 flex justify-center bg-[#f0f0f0]">
          <div className="w-[10px] h-full bg-[radial-gradient(#bbb_1px,transparent_1.500px)] bg-[length:5px_5px]" />
        </div>
        <RightArea />
      </div>
      <StatusBar />
      <Taskbar />
      <div className="absolute left-[1173px] top-[-30px] w-[48px] h-[48px] rounded-full bg-[linear-gradient(#1f9c44,#35c75e)] shadow-[0_1px_3px_rgba(0,0,0,0.6)] flex items-end justify-center pb-[3px] text-white text-[13px] font-bold">69</div>
      <Sogou />
      <PropEditor />
      <Dialog />
      <Annotations />
    </div>
  );
}
